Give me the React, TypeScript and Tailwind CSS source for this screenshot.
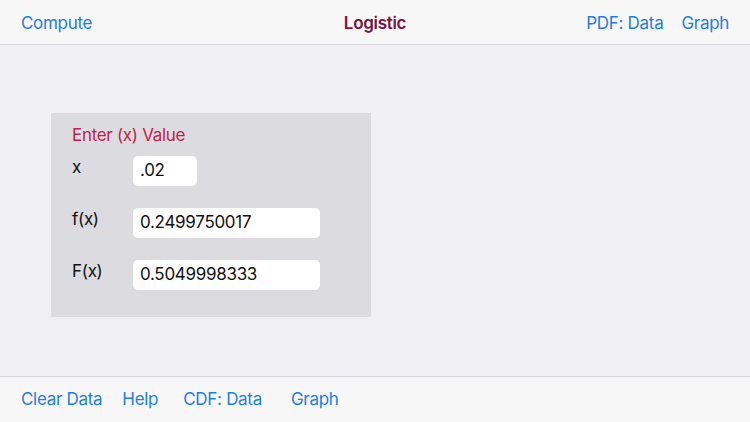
export default function App() {
  const rows = [
    { label: 'x', value: '.02', width: 'w-[64px]' },
    { label: 'f(x)', value: '0.2499750017', width: 'w-[187px]' },
    { label: 'F(x)', value: '0.5049998333', width: 'w-[187px]' },
  ];

  return (
    <div className="w-[750px] h-[422px] flex flex-col bg-[#efeff4] font-['Inter',sans-serif] text-[17px] tracking-[-0.3px] overflow-hidden">
      {/* Top navigation bar */}
      <header className="h-[45px] shrink-0 flex items-center justify-between px-[21px] pt-[3px] bg-[#f7f7f8] border-b border-[#d8d8dc]">
        <span className="text-[#1f7ddf] w-[200px]">Compute</span>
        <span className="text-[#7b1142] font-semibold">Logistic</span>
        <div className="flex gap-[18px] w-[200px] justify-end">
          <span className="text-[#1f7ddf]">PDF: Data</span>
          <span className="text-[#1f7ddf]">Graph</span>
        </div>
      </header>

      {/* Content */}
      <main className="flex-1 pl-[51px] pt-[68px]">
        <section className="w-[320px] h-[204px] bg-[#dcdce0] pl-[21px] pt-[11px]">
          <h2 className="text-[#c41e4a] leading-[22px]">Enter (x) Value</h2>
          <div className="mt-[10px] flex flex-col gap-[22px]">
            {rows.map((row) => (
              <div key={row.label} className="flex items-start">
                <span className="w-[61px] leading-[22px] text-[#111]">{row.label}</span>
                <div
                  className={`${row.width} h-[30px] bg-white rounded-[5px] pl-[7px] flex items-center text-[#111]`}
                >
                  {row.value}
                </div>
              </div>
            ))}
          </div>
        </section>
      </main>

      {/* Bottom toolbar */}
      <footer className="h-[46px] shrink-0 flex items-center px-[21px] pt-[1px] bg-[#f7f7f8] border-t border-[#d8d8dc] text-[#1f7ddf]">
        <span>Clear Data</span>
        <span className="ml-[20px]">Help</span>
        <span className="ml-[25px]">CDF: Data</span>
        <span className="ml-[29px]">Graph</span>
      </footer>
    </div>
  );
}
